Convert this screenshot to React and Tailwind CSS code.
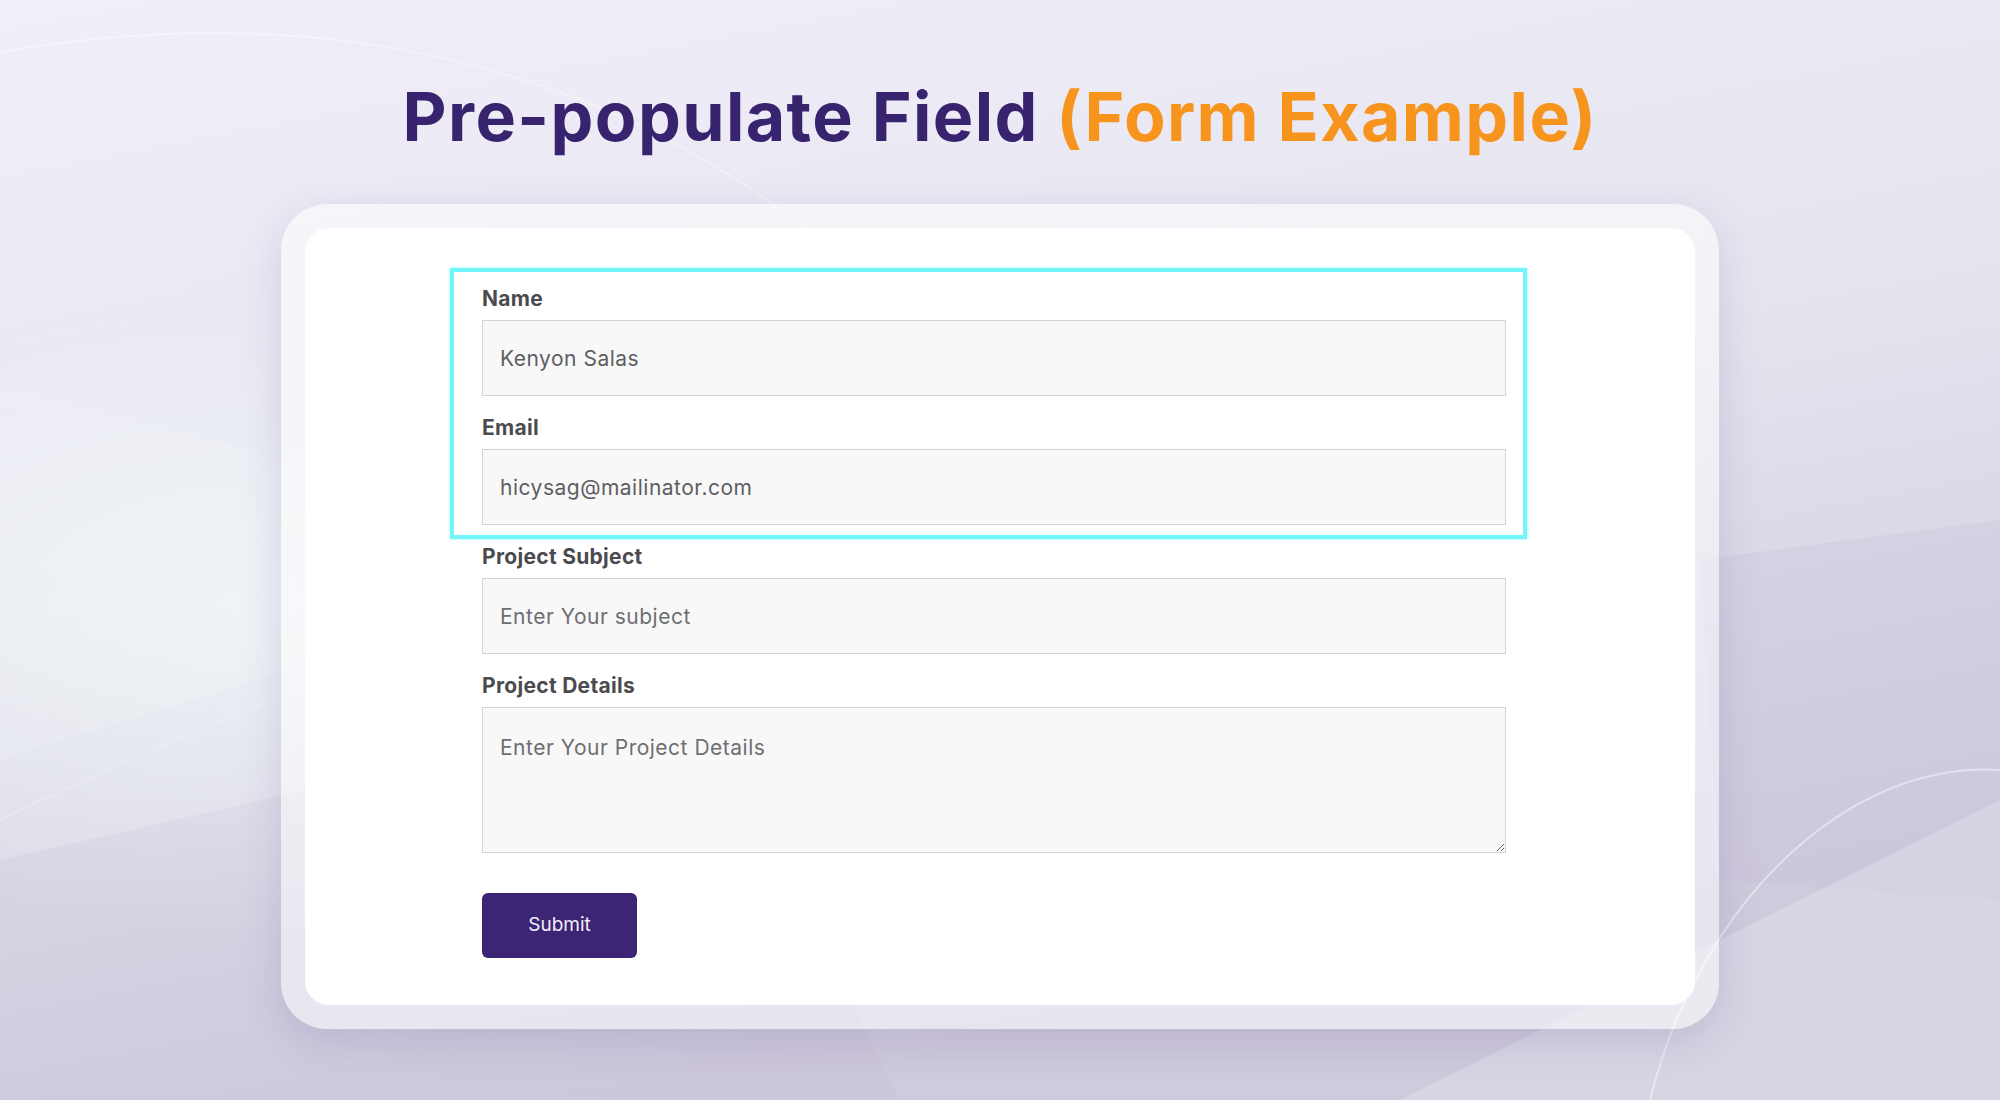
import React from 'react';

const fields = [
    { label: 'Name', value: 'Kenyon Salas' },
    { label: 'Email', value: 'hicysag@mailinator.com' },
    { label: 'Project Subject', placeholder: 'Enter Your subject' },
];

function Backdrop() {
    return (
        <svg className="absolute inset-0 pointer-events-none" width="2000" height="1100" viewBox="0 0 2000 1100">
            <defs>
                <linearGradient id="bg" x1="0" y1="0" x2="0.35" y2="1">
                    <stop offset="0" stopColor="#f2eef9" />
                    <stop offset="0.5" stopColor="#e5e5ef" />
                    <stop offset="1" stopColor="#cfcadc" />
                </linearGradient>
                <radialGradient id="glow" cx="0.12" cy="0.55" r="0.3">
                    <stop offset="0" stopColor="#eef3f6" stopOpacity="0.9" />
                    <stop offset="1" stopColor="#eef3f6" stopOpacity="0" />
                </radialGradient>
            </defs>
            <rect width="2000" height="1100" fill="url(#bg)" />
            <rect width="2000" height="1100" fill="url(#glow)" />
            <polygon points="0,380 640,560 0,760" fill="#ffffff" opacity="0.12" />
            <polygon points="0,860 700,700 900,1100 0,1100" fill="#bdb6d2" opacity="0.15" />
            <polygon points="1700,560 2000,520 2000,900 1720,880" fill="#c6c1da" opacity="0.3" />
            <polygon points="1400,1100 2000,800 2000,1100" fill="#ffffff" opacity="0.2" />
            <path d="M-40 60 C 300 -10, 600 60, 820 240" stroke="#ffffff" strokeOpacity="0.4" strokeWidth="1.5" fill="none" />
            <path d="M1650 1100 C 1700 900, 1850 760, 2000 770" stroke="#ffffff" strokeOpacity="0.45" strokeWidth="2" fill="none" />
            <path d="M0 820 C 250 700, 420 640, 600 600" stroke="#ffffff" strokeOpacity="0.25" strokeWidth="1.5" fill="none" />
        </svg>
    );
}

function Field({ label, value, placeholder }) {
    return (
        <div className="flex flex-col">
            <label className="text-[21px] leading-[24px] font-bold tracking-[0.3px] text-[#4b4b4f] mb-[9px]">{label}</label>
            <input
                readOnly
                defaultValue={value}
                placeholder={placeholder}
                className="h-[76px] w-full border border-[#d3d3d3] bg-[#f8f8f8] px-[17px] text-[21px] tracking-[0.5px] text-[#5e5e62] placeholder:text-[#6e6e72] outline-none"
            />
        </div>
    );
}

export default function App() {
    return (
        <div className="relative w-[2000px] h-[1100px] overflow-hidden" style={{ fontFamily: 'Inter, "Noto Sans", sans-serif' }}>
            <Backdrop />
            <div className="relative flex flex-col items-center pt-[82px]">
                <h1 className="text-[68px] leading-[68px] font-bold tracking-[1.4px] text-[#38236f]">
                    Pre-populate Field <span className="text-[#f7941e]">(Form Example)</span>
                </h1>

                <div className="mt-[54px] w-[1438px] h-[825px] rounded-[46px] bg-white/50 p-[24px] shadow-[0_12px_40px_rgba(90,70,150,0.18)]">
                    <div className="w-full h-full rounded-[24px] bg-white pt-[59px] pl-[177px]">
                        <div className="w-[1024px] flex flex-col">
                            <div className="relative flex flex-col gap-[20px]">
                                <div className="absolute -top-[19px] -left-[32px] w-[1077px] h-[271px] border-4 border-[#72f6fc] shadow-[0_0_3px_#9ff8fc] pointer-events-none" />
                                {fields.map((f) => (
                                    <Field key={f.label} {...f} />
                                ))}
                                <div className="flex flex-col">
                                    <label className="text-[21px] leading-[24px] font-bold tracking-[0.3px] text-[#4b4b4f] mb-[9px]">Project Details</label>
                                    <textarea
                                        readOnly
                                        placeholder="Enter Your Project Details"
                                        className="h-[146px] w-full border border-[#d3d3d3] bg-[#f8f8f8] px-[17px] pt-[24px] text-[21px] tracking-[0.5px] leading-[32px] text-[#5e5e62] placeholder:text-[#6e6e72] outline-none"
                                    />
                                </div>
                            </div>
                            <button className="mt-[40px] w-[155px] h-[65px] rounded-[6px] bg-[#3b2574] text-[19px] text-[#f1eff8]">
                                Submit
                            </button>
                        </div>
                    </div>
                </div>
            </div>
        </div>
    );
}
